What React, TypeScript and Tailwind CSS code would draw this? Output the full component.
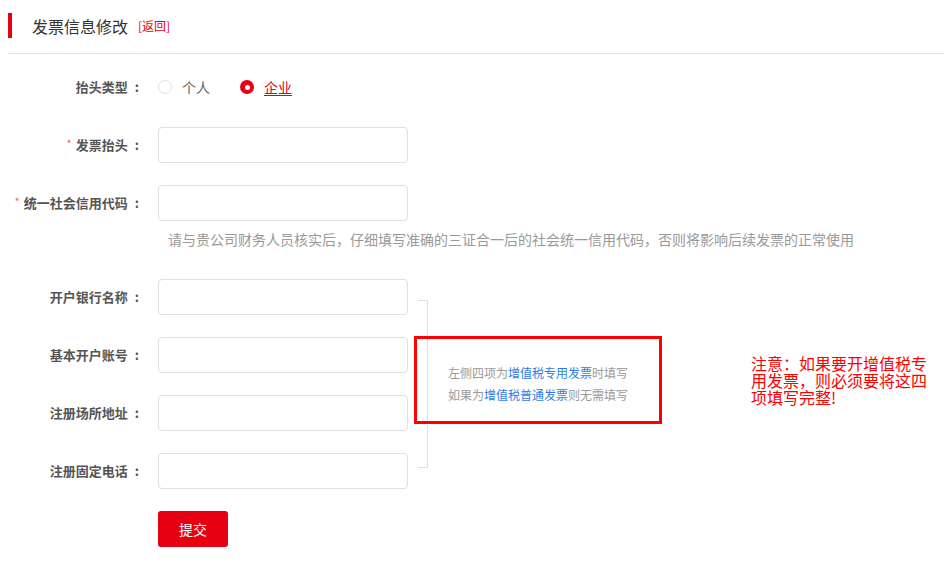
import { ReactNode } from "react"

const fields = ["开户银行名称", "基本开户账号", "注册场所地址", "注册固定电话"]

function Label({ text, required }: { text: string; required?: boolean }) {
    return (
        <div className="w-[142px] shrink-0 text-right text-[13px] font-bold text-[#555]">
            {required && <span className="mr-[4px] align-top text-[11px] font-normal text-[#f56c6c]">*</span>}
            {text}
            <span className="ml-[7px] mr-[3px]">:</span>
        </div>
    )
}

function Row({ label, required, children, className = "" }: { label: string; required?: boolean; children: ReactNode; className?: string }) {
    return (
        <div className={`flex items-center ${className}`}>
            <Label text={label} required={required} />
            <div className="ml-4">{children}</div>
        </div>
    )
}

function Field() {
    return <input className="block h-[36px] w-[250px] rounded-[4px] border border-[#dcdfe6] bg-white px-3 text-[13px] outline-none" />
}

export default function App() {
    return (
        <div className="relative min-h-[587px] w-full bg-white" style={{ fontFamily: '"Noto Sans CJK SC", "Noto Sans", sans-serif' }}>
            {/* HEADER */}
            <div className="ml-2 border-b border-[#e3e3ea] pt-[13px] pb-[15px]">
                <div className="flex h-[25px] items-center border-l-4 border-[#e60012] pl-5">
                    <span className="text-[16px] text-[#333]">发票信息修改</span>
                    <a className="ml-[10px] text-[12px] text-[#e60012]">[返回]</a>
                </div>
            </div>

            {/* FORM */}
            <div className="pt-[23px]">
                <Row label="抬头类型" className="h-5">
                    <div className="flex items-center text-[14px]">
                        <span className="h-[14px] w-[14px] rounded-full border border-[#dcdfe6]" />
                        <span className="ml-[10px] text-[#666]">个人</span>
                        <span className="ml-[30px] flex h-[14px] w-[14px] items-center justify-center rounded-full bg-[#e60012]">
                            <span className="h-[5px] w-[5px] rounded-full bg-white" />
                        </span>
                        <span className="ml-[10px] text-[#e60012] underline underline-offset-2">企业</span>
                    </div>
                </Row>
                <Row label="发票抬头" required className="mt-[30px]">
                    <Field />
                </Row>
                <Row label="统一社会信用代码" required className="mt-[22px]">
                    <Field />
                </Row>
                <p className="ml-[168px] mt-[8px] text-[14px] leading-5 text-[#999]">
                    请与贵公司财务人员核实后，仔细填写准确的三证合一后的社会统一信用代码，否则将影响后续发票的正常使用
                </p>

                <div className="mt-[30px] flex">
                    <div className="flex flex-col gap-[22px]">
                        {fields.map((f) => (
                            <Row key={f} label={f}>
                                <Field />
                            </Row>
                        ))}
                    </div>
                    <div className="my-[21px] ml-[10px] w-[10px] border-y border-r border-[#dcdfe6]" />
                    <div className="ml-[20px] flex flex-col justify-center text-[12px] leading-[22px] text-[#999]">
                        <p>左侧四项为<span className="text-[#2b7ce9]">增值税专用发票</span>时填写</p>
                        <p>如果为<span className="text-[#2b7ce9]">增值税普通发票</span>则无需填写</p>
                    </div>
                </div>

                <button className="ml-[158px] mt-[22px] h-[36px] w-[70px] rounded-[3px] bg-[#e60012] text-[14px] text-white">
                    提交
                </button>
            </div>

            {/* ANNOTATIONS */}
            <div className="absolute left-[414px] top-[336px] h-[88px] w-[248px] border-[3px] border-[#ff0000]" />
            <p className="absolute left-[751px] top-[355px] w-[182px] text-[16px] leading-[17px] text-[#ff0000]">
                注意：如果要开增值税专用发票，则必须要将这四项填写完整!
            </p>
        </div>
    )
}
